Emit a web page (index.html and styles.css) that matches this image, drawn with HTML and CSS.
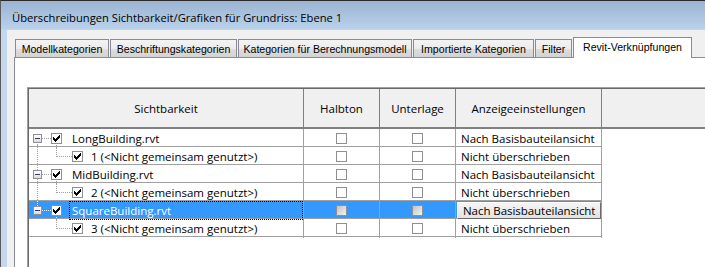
FILE: index.html
```html
<!DOCTYPE html>
<html lang="de">
<head>
<meta charset="utf-8">
<title>Sichtbarkeit/Grafiken</title>
<link rel="stylesheet" href="styles.css">
</head>
<body>
<div class="window">
  <div class="titlebar">Überschreibungen Sichtbarkeit/Grafiken für Grundriss: Ebene 1</div>
  <div class="client">
    <div class="tabs">
      <div class="tab t1">Modellkategorien</div>
      <div class="tab t2">Beschriftungskategorien</div>
      <div class="tab t3">Kategorien für Berechnungsmodell</div>
      <div class="tab t4">Importierte Kategorien</div>
      <div class="tab t5">Filter</div>
      <div class="tab sel">Revit-Verknüpfungen</div>
    </div>
    <div class="panel">
      <div class="grid">
        <div class="grid-in">
          <div class="head">
            <div class="hc">Sichtbarkeit</div>
            <div class="hc">Halbton</div>
            <div class="hc">Unterlage</div>
            <div class="hc">Anzeigeeinstellungen</div>
            <div class="hc last"></div>
          </div>

          <div class="row">
            <div class="tree p first"><span class="exp"></span><span class="hl"></span><span class="cb"><svg viewBox="0 0 9 9" width="9" height="9"><path class="tick" d="M6 0h1v1h-1z M5 1h2v1h-2z M0 2h1v1h-1z M4 2h3v1h-3z M0 3h2v1h-2z M3 3h3v1h-3z M0 4h5v1h-5z M1 5h3v1h-3z M2 6h1v1h-1z" transform="translate(1 1)"/></svg></span><span class="label">LongBuilding.rvt</span></div>
            <div class="cc"><span class="cb"></span></div>
            <div class="cc"><span class="cb"></span></div>
            <div class="tc">Nach Basisbauteilansicht</div>
          </div>

          <div class="row">
            <div class="tree c thru"><span class="conn"></span><span class="cb"><svg viewBox="0 0 9 9" width="9" height="9"><path class="tick" d="M6 0h1v1h-1z M5 1h2v1h-2z M0 2h1v1h-1z M4 2h3v1h-3z M0 3h2v1h-2z M3 3h3v1h-3z M0 4h5v1h-5z M1 5h3v1h-3z M2 6h1v1h-1z" transform="translate(1 1)"/></svg></span><span class="label">1 (&lt;Nicht gemeinsam genutzt&gt;)</span></div>
            <div class="cc"><span class="cb"></span></div>
            <div class="cc"><span class="cb"></span></div>
            <div class="tc">Nicht überschrieben</div>
          </div>

          <div class="row">
            <div class="tree p mid"><span class="exp"></span><span class="hl"></span><span class="cb"><svg viewBox="0 0 9 9" width="9" height="9"><path class="tick" d="M6 0h1v1h-1z M5 1h2v1h-2z M0 2h1v1h-1z M4 2h3v1h-3z M0 3h2v1h-2z M3 3h3v1h-3z M0 4h5v1h-5z M1 5h3v1h-3z M2 6h1v1h-1z" transform="translate(1 1)"/></svg></span><span class="label">MidBuilding.rvt</span></div>
            <div class="cc"><span class="cb"></span></div>
            <div class="cc"><span class="cb"></span></div>
            <div class="tc">Nach Basisbauteilansicht</div>
          </div>

          <div class="row">
            <div class="tree c thru"><span class="conn"></span><span class="cb"><svg viewBox="0 0 9 9" width="9" height="9"><path class="tick" d="M6 0h1v1h-1z M5 1h2v1h-2z M0 2h1v1h-1z M4 2h3v1h-3z M0 3h2v1h-2z M3 3h3v1h-3z M0 4h5v1h-5z M1 5h3v1h-3z M2 6h1v1h-1z" transform="translate(1 1)"/></svg></span><span class="label">2 (&lt;Nicht gemeinsam genutzt&gt;)</span></div>
            <div class="cc"><span class="cb"></span></div>
            <div class="cc"><span class="cb"></span></div>
            <div class="tc">Nicht überschrieben</div>
          </div>

          <div class="row selected">
            <div class="tree p last"><span class="exp"></span><span class="hl"></span><span class="cb"><svg viewBox="0 0 9 9" width="9" height="9"><path class="tick" d="M6 0h1v1h-1z M5 1h2v1h-2z M0 2h1v1h-1z M4 2h3v1h-3z M0 3h2v1h-2z M3 3h3v1h-3z M0 4h5v1h-5z M1 5h3v1h-3z M2 6h1v1h-1z" transform="translate(1 1)"/></svg></span><span class="label focus">SquareBuilding.rvt</span></div>
            <div class="cc"><span class="cb dis"></span></div>
            <div class="cc"><span class="cb dis"></span></div>
            <div class="tc"><span class="btn">Nach Basisbauteilansicht</span></div>
          </div>

          <div class="row">
            <div class="tree c"><span class="conn"></span><span class="cb"><svg viewBox="0 0 9 9" width="9" height="9"><path class="tick" d="M6 0h1v1h-1z M5 1h2v1h-2z M0 2h1v1h-1z M4 2h3v1h-3z M0 3h2v1h-2z M3 3h3v1h-3z M0 4h5v1h-5z M1 5h3v1h-3z M2 6h1v1h-1z" transform="translate(1 1)"/></svg></span><span class="label">3 (&lt;Nicht gemeinsam genutzt&gt;)</span></div>
            <div class="cc"><span class="cb"></span></div>
            <div class="cc"><span class="cb"></span></div>
            <div class="tc">Nicht überschrieben</div>
          </div>
        </div>
      </div>
    </div>
  </div>
</div>
</body>
</html>
```

FILE: styles.css
```css
html, body {
  margin: 0;
  padding: 0;
}

body {
  width: 705px;
  height: 267px;
  overflow: hidden;
  background: #c3d8ee;
}

.window {
  width: 705px;
  height: 267px;
  box-sizing: border-box;
  border-top: 1px solid #2a2a2a;
  border-left: 1px solid #5b5b5b;
  background: linear-gradient(to bottom, #9ab4d2 0px, #b9d1ea 28px, #c3d8ee 29px, #c3d8ee 100%);
  display: flex;
  flex-direction: column;
  overflow: hidden;
}

.titlebar {
  flex: none;
  height: 29px;
  box-sizing: border-box;
  padding: 9px 0 0 11px;
  font: 11.2px/15px "Open Sans", sans-serif;
  color: #000;
  white-space: nowrap;
}

.client {
  flex: 1;
  margin-left: 6px;
  background: #f0f0f0;
  display: flex;
  flex-direction: column;
  padding-top: 7px;
  min-height: 0;
}

.tabs {
  flex: none;
  display: flex;
  align-items: flex-end;
  height: 20px;
  margin-left: 8px;
}

.tab {
  box-sizing: border-box;
  height: 18px;
  border: 1px solid #898c95;
  border-bottom: none;
  margin-right: 1px;
  display: flex;
  align-items: center;
  justify-content: center;
  font: 10.6px/12px "Liberation Sans", Arial, sans-serif;
  color: #000;
  white-space: nowrap;
  background: linear-gradient(to bottom, #f3f3f3 0%, #ececec 50%, #dedede 51%, #d3d3d3 100%);
}

.t1 { width: 94px; }
.t2 { width: 127px; }
.t3 { width: 174px; }
.t4 { width: 121px; }
.t5 { width: 37px; }

.tab.sel {
  width: 119px;
  height: 21px;
  margin-bottom: -1px;
  padding-bottom: 2px;
  background: #fff;
  position: relative;
  z-index: 1;
}

.panel {
  flex: 1;
  margin-left: 7px;
  margin-right: -40px;
  background: #fff;
  border-top: 1px solid #898c95;
  border-left: 1px solid #898c95;
}

.grid {
  margin: 29px 0 0 12px;
  height: 400px;
  border-top: 1px solid #a0a0a0;
  border-left: 1px solid #a0a0a0;
}

.grid-in {
  height: 100%;
  border-top: 1px solid #696969;
  border-left: 1px solid #696969;
  font: 11.5px/17px "Open Sans", sans-serif;
  color: #000;
}

.head {
  display: grid;
  grid-template-columns: 275px 76px 76px 146px 1fr;
  height: 40px;
  box-sizing: border-box;
  border-bottom: 2px solid #808080;
  background: #f0f0f0;
}

.hc {
  border-right: 1px solid #808080;
  display: flex;
  align-items: center;
  justify-content: center;
  white-space: nowrap;
}

.hc.last {
  border-right: none;
}

.row {
  display: grid;
  grid-template-columns: 275px 76px 76px 146px;
  width: 573px;
  height: 18px;
  box-sizing: border-box;
  border-bottom: 1px solid #a0a0a0;
}

.row > div {
  box-sizing: border-box;
  border-right: 1px solid #a0a0a0;
  min-width: 0;
}

.row.selected {
  background: #3399ff;
}

/* tree column */
.tree {
  position: relative;
  display: flex;
  align-items: center;
  white-space: nowrap;
}

.tree.p {
  padding-left: 4px;
}

.tree.c {
  padding-left: 27px;
}

.exp {
  flex: none;
  width: 9px;
  height: 9px;
  box-sizing: border-box;
  border: 1px solid #919191;
  background: linear-gradient(to bottom, #ffffff, #dcdcdc);
  display: flex;
  align-items: center;
  justify-content: center;
  position: relative;
  z-index: 1;
}

.exp::before {
  content: "";
  width: 5px;
  height: 1px;
  background: #2e3d68;
}

.hl {
  flex: none;
  width: 9px;
  height: 0;
  border-top: 1px dotted #a0a0a0;
}

.conn {
  flex: none;
  align-self: flex-start;
  width: 16px;
  height: 10px;
  box-sizing: border-box;
  border-left: 1px dotted #a0a0a0;
  border-bottom: 1px dotted #a0a0a0;
}

.tree::before,
.tree.p::after {
  content: "";
  position: absolute;
  border-left: 1px dotted #a0a0a0;
}

.tree::before {
  left: 8px;
}

.tree.c::before {
  display: none;
}

.tree.c.thru::before {
  display: block;
  top: 0;
  bottom: 0;
}

.tree.p.first::before {
  top: calc(50% + 5px);
  bottom: 0;
}

.tree.p.mid::before {
  top: 0;
  bottom: 0;
}

.tree.p.last::before {
  top: 0;
  height: calc(50% - 5px);
}

.tree.p::after {
  left: 27px;
  top: calc(50% + 6px);
  bottom: 0;
}

.tree.p.last::after {
  border-left-color: #ffffff;
}

.selected .hl,
.selected .tree::before {
  border-color: #ffffff;
}

.cb {
  flex: none;
  width: 11px;
  height: 11px;
  box-sizing: border-box;
  border: 1px solid #8e8f8f;
  background: #fff;
  display: block;
  position: relative;
  z-index: 1;
}

.cb svg {
  display: block;
  width: 9px;
  height: 9px;
}

.tick {
  fill: #000;
  shape-rendering: crispEdges;
}

.cb.dis {
  background: linear-gradient(to bottom right, #c2c2c2, #f2f2f2);
}

.label {
  align-self: stretch;
  display: flex;
  align-items: center;
  box-sizing: border-box;
  border: 1px dotted transparent;
  padding: 0 2px;
  flex: 1;
  min-width: 0;
}

.tree.p .label {
  margin-left: 7px;
}

.tree.c .label {
  margin-left: 5px;
}

.label.focus {
  border-color: #000;
  color: #fff;
}

.cc {
  display: flex;
  align-items: center;
  justify-content: center;
}

.tc {
  display: flex;
  align-items: center;
  padding-left: 5px;
  white-space: nowrap;
}

.selected .tc {
  padding: 1px 0 1px 1px;
  align-items: stretch;
}

.btn {
  flex: 1;
  display: flex;
  align-items: center;
  box-sizing: border-box;
  padding-left: 5px;
  border: 1px solid;
  border-color: #ffffff #696969 #696969 #ffffff;
  background: linear-gradient(to bottom, #f5f5f5, #e2e2e2);
  color: #000;
  line-height: 13px;
  letter-spacing: -0.05px;
}
```
